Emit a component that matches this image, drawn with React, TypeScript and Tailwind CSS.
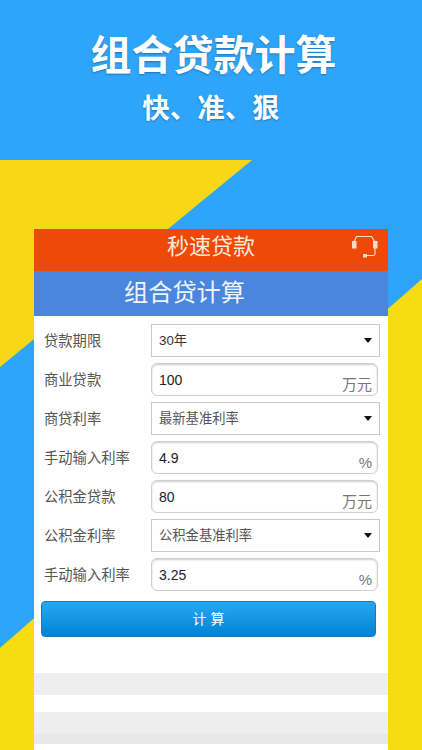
const sans = 'font-["Liberation_Sans","Noto_Sans_CJK_SC",sans-serif]'

function HeadsetIcon() {
  return (
    <svg className="w-[27px] h-[26px]" viewBox="0 0 27 26" fill="none">
      <path d="M3 8 L5.500 2.500 L20.500 2.500 L24 8 L24 20 Q24 21.500 22 21.500 L15 21.500" stroke="#fbdccb" strokeWidth="1.200" />
      <rect x="1" y="7" width="4.500" height="7.500" fill="#fbdccb" />
      <rect x="22" y="7" width="4.500" height="7.500" fill="#fbdccb" />
      <rect x="12" y="20" width="4" height="3.500" fill="#fbdccb" />
    </svg>
  )
}

function SelectRow({ label, value, dark }: { label: string; value: string; dark?: boolean }) {
  return (
    <div className="flex items-center h-[33px]">
      <span className="w-[107px] pt-[2px] text-[14.3px] text-[#555]">{label}</span>
      <div className="w-[229px] h-[33px] bg-white border border-[#c9c9c9] flex items-center justify-between pl-[7px] pr-[7px]">
        <span className={`text-[13.300px] ${dark ? 'text-[#333]' : 'text-[#555]'}`}>{value}</span>
        <svg className="w-[8px] h-[5px]" viewBox="0 0 10 6">
          <path d="M0 0 L10 0 L5 6 Z" fill="#111" />
        </svg>
      </div>
    </div>
  )
}

function InputRow({ label, value, unit }: { label: string; value: string; unit: string }) {
  return (
    <div className="flex items-center h-[33px]">
      <span className="w-[107px] pt-[2px] text-[14.3px] text-[#555]">{label}</span>
      <div className="relative w-[227px] h-[33px] bg-white border border-[#cfcfcf] rounded-[6px] shadow-[inset_0_1px_2px_rgba(0,0,0,0.2)] flex items-center pl-[7px] pt-px">
        <span className="text-[14px] text-[#222]">{value}</span>
        <span className="absolute right-[5px] bottom-[2px] text-[15px] leading-[16px] text-[#777]">{unit}</span>
      </div>
    </div>
  )
}

export default function App() {
  return (
    <div className={`relative w-[422px] h-[750px] overflow-hidden bg-[#2ea5fb] ${sans}`}>
      {/* background shapes */}
      <svg className="absolute inset-0 w-[422px] h-[750px]" viewBox="0 0 422 750">
        <path d="M0 160 L252 160 L0 367 Z" fill="#f8d716" />
        <path d="M422 279 L422 750 L0 750 L0 648 Z" fill="#f8dc12" />
      </svg>

      <div className="relative">
        <div className="h-[229px] flex flex-col items-center pt-[28px]">
          <h1 className='ml-[5px] text-[41px] leading-[48px] font-bold text-white font-["Noto_Sans_CJK_SC",sans-serif] [text-shadow:0_1px_2px_rgba(0,0,0,0.3)]'>组合贷款计算</h1>
          <p className='mt-[12px] text-[27.5px] leading-[36px] font-bold text-white font-["Noto_Sans_CJK_SC",sans-serif] [text-shadow:0_1px_2px_rgba(0,0,0,0.3)]'>快、准、狠</p>
        </div>

        <div className="mx-[34px] w-[354px] h-[521px] bg-white">
          <div className="relative h-[42px] bg-[#ee4908] flex items-center justify-center pb-[7px]">
            <span className="text-[22px] text-[#fde9de]">秒速贷款</span>
            <div className="absolute right-[10px] top-[5px]">
              <HeadsetIcon />
            </div>
          </div>
          <div className="h-[45px] bg-[#4a86dc] flex items-center pl-[90px]">
            <span className="text-[24.2px] text-[#eef4fc]">组合贷计算</span>
          </div>

          <div className="flex flex-col gap-[6px] pt-[8px] pl-[10px]">
            <SelectRow label="贷款期限" value="30年" dark />
            <InputRow label="商业贷款" value="100" unit="万元" />
            <SelectRow label="商贷利率" value="最新基准利率" />
            <InputRow label="手动输入利率" value="4.9" unit="%" />
            <InputRow label="公积金贷款" value="80" unit="万元" />
            <SelectRow label="公积金利率" value="公积金基准利率" />
            <InputRow label="手动输入利率" value="3.25" unit="%" />
          </div>

          <div className="px-[7px] mt-[10px]">
            <button className="w-[335px] h-[36px] rounded-[4px] border border-[#1a78bb] bg-gradient-to-b from-[#25a8f0] to-[#0083d6] text-[14px] text-white">
              计 算
            </button>
          </div>

          <div className="mt-[36px] h-[22px] bg-[#eeeeee]" />
          <div className="h-[17px]" />
          <div className="h-[22px] bg-[#eeeeee]" />
          <div className="h-[10px] bg-[#e8e8e8]" />
        </div>
      </div>
    </div>
  )
}
